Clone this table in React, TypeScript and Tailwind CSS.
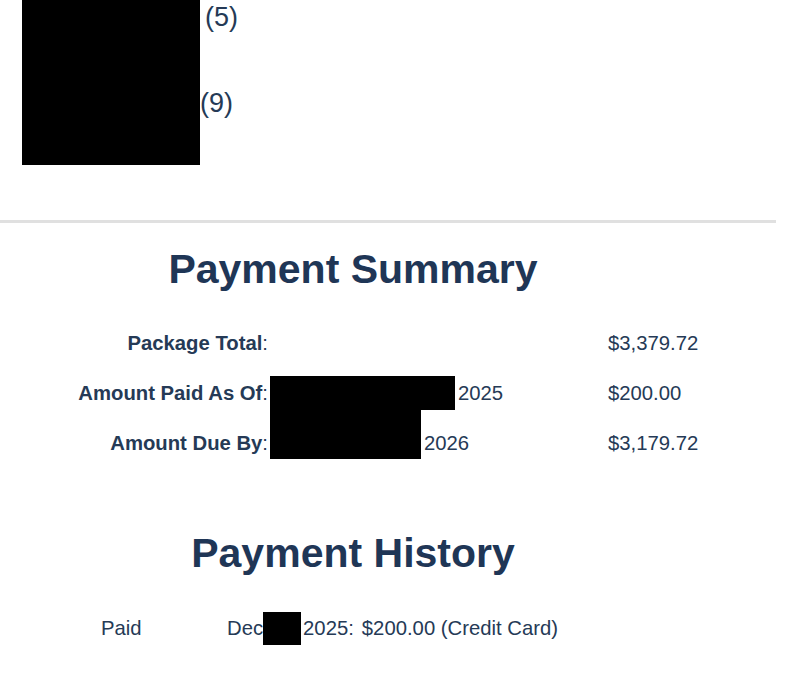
import React from 'react';

const text = 'text-[#253a56]';
const heading = 'text-[41px] leading-[48px] font-bold text-[#1f3656] text-center w-[706px]';

const Redact: React.FC<{ className: string }> = ({ className }) => (
  <span className={`inline-block bg-black ${className}`} />
);

const summaryRows = [
  { label: 'Package Total', box: null, year: '', amount: '$3,379.72' },
  { label: 'Amount Paid As Of', box: 'w-[185px] h-[34px]', year: '2025', amount: '$200.00' },
  { label: 'Amount Due By', box: 'w-[151px] h-[52px] mt-[-20px]', year: '2026', amount: '$3,179.72' },
];

export default function App() {
  return (
    <div className={`bg-white w-[805px] h-[700px] overflow-hidden ${text}`} style={{ fontFamily: '"Liberation Sans", Arial, sans-serif' }}>
      {/* Top list */}
      <div className="flex pl-[22px]">
        <div className="w-[178px] h-[165px] bg-black" />
        <div className="flex flex-col text-[27px] leading-[32px]">
          <span className="ml-[5px] mt-[1px]">(5)</span>
          <span className="mt-[54px]">(9)</span>
        </div>
      </div>

      <div className="mt-[55px] h-[3px] w-[776px] bg-[#e0e0e0]" />

      {/* Payment Summary */}
      <h2 className={`${heading} mt-[22px]`}>Payment Summary</h2>

      <div className="mt-[25px] flex flex-col text-[20.3px]">
        {summaryRows.map((row) => (
          <div key={row.label} className="flex items-center h-[50px]">
            <div className="w-[270px] pr-[2px] text-right">
              <span className="font-bold">{row.label}</span>:
            </div>
            <div className="w-[338px] flex items-center">
              {row.box && <Redact className={row.box} />}
              {row.year && <span className="ml-[3px]">{row.year}</span>}
            </div>
            <div>{row.amount}</div>
          </div>
        ))}
      </div>

      {/* Payment History */}
      <h2 className={`${heading} mt-[61px]`}>Payment History</h2>

      <div className="mt-[31px] flex items-center h-[40px] text-[20.3px]">
        <span className="ml-[101px] w-[126px]">Paid</span>
        <span>Dec</span>
        <Redact className="w-[38px] h-[33px]" />
        <span className="ml-[2px]">2025:</span>
        <span className="ml-[8px]">$200.00 (Credit Card)</span>
      </div>
    </div>
  );
}
